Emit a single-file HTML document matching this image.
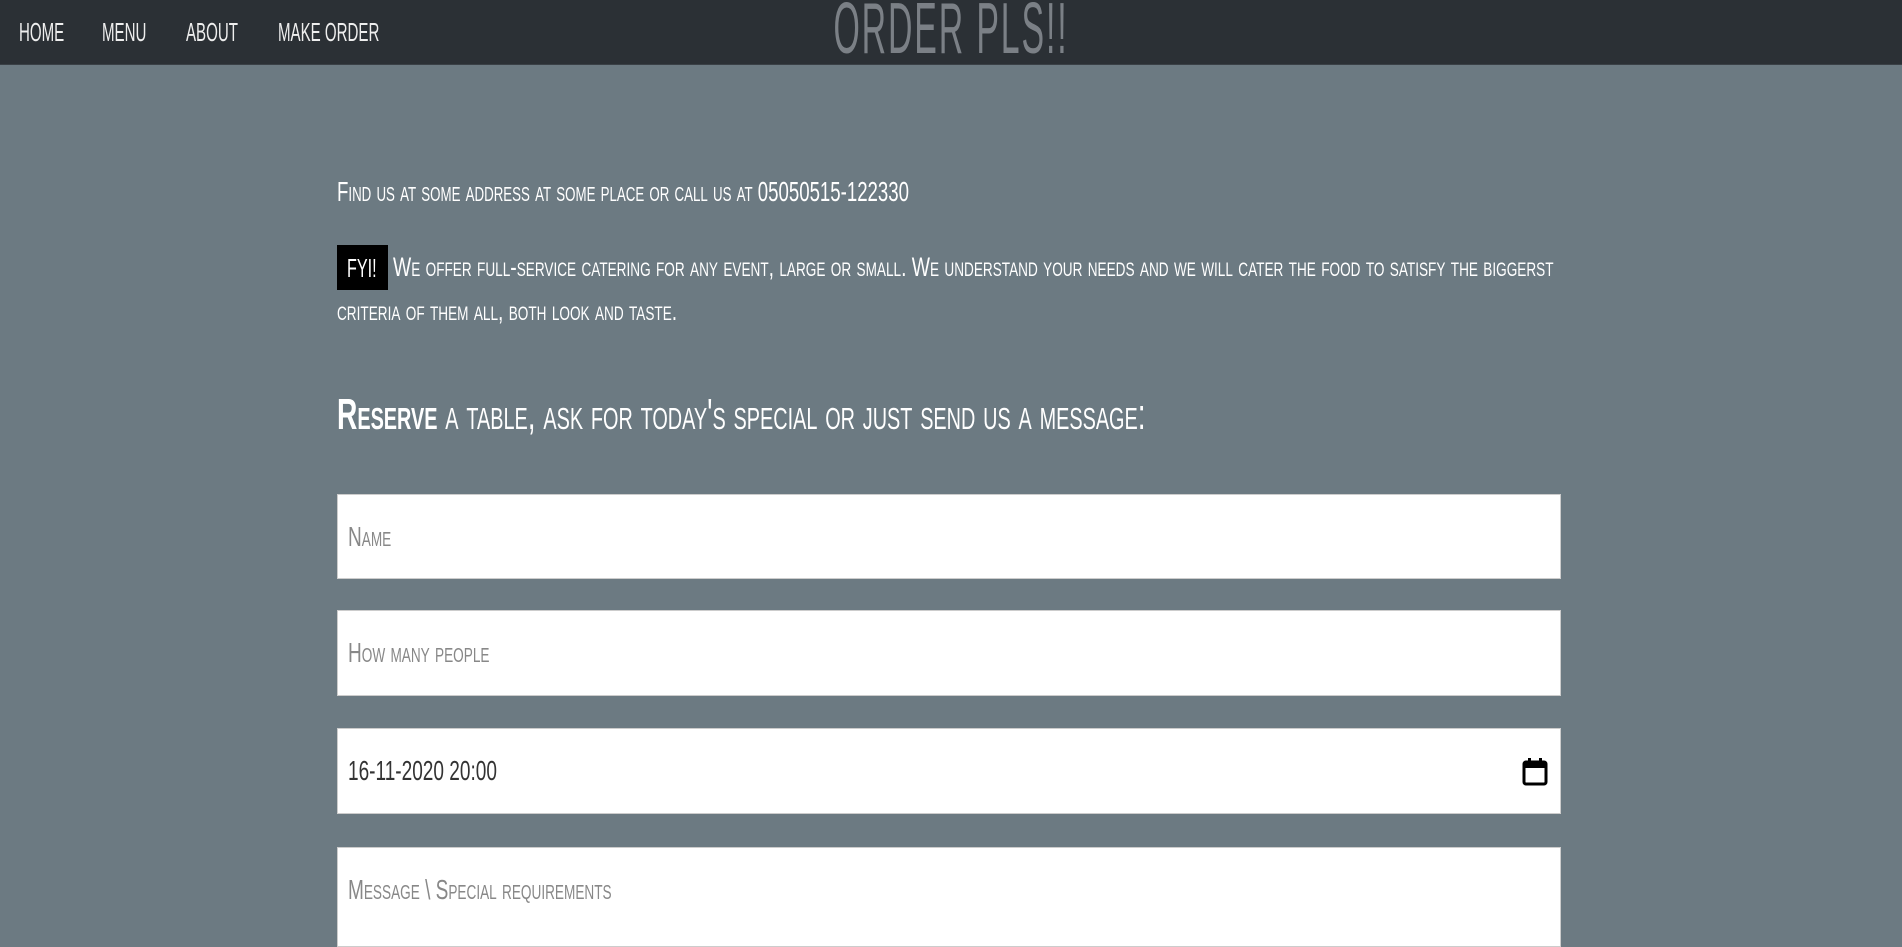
<!DOCTYPE html>
<html><head><meta charset="utf-8"><style>
html,body{margin:0;padding:0;width:1902px;height:926px;overflow:hidden;background:#6c7a82;font-family:"Liberation Sans Narrow","Liberation Sans",sans-serif;color:#fff}
nav{position:absolute;left:0;top:0;width:1902px;height:64px;background:#2b3035;border-bottom:1px solid #3a4046;overflow:hidden}
nav a{position:absolute;top:17px;font-size:26px;color:#eee;text-transform:uppercase;transform:scaleX(.58);transform-origin:left;letter-spacing:0}
.title{position:absolute;left:0;width:1902px;text-align:center;top:-12px;font-size:72px;color:#7b8086;letter-spacing:4px;transform:scaleX(.47);}
.c{position:absolute;left:337px;font-variant:small-caps;white-space:nowrap;transform-origin:left;}
.fyi{position:absolute;left:337px;top:245px;width:51px;height:45px;background:#000}
.inp{position:absolute;left:337px;width:1224px;background:#fff;border:1px solid #ccc;box-sizing:border-box}
.ph{position:absolute;left:10px;font-size:28px;color:#888;font-variant:small-caps;transform:scaleX(.68);transform-origin:left;white-space:nowrap}
</style></head><body>
<nav>
<a style="left:19px">Home</a>
<a style="left:102px">Menu</a>
<a style="left:186px">About</a>
<a style="left:278px">Make order</a>
<div class="title">ORDER PLS!!</div>
</nav>
<div class="c" style="top:176px;font-size:28px;transform:scaleX(.665)">Find us at some address at some place or call us at 05050515-122330</div>
<div class="fyi"></div>
<div class="c" style="top:253px;left:347px;font-size:26px;transform:scaleX(.62)">FYI!</div>
<div class="c" style="top:252px;left:393px;font-size:27px;transform:scaleX(.715)">We offer full-service catering for any event, large or small. We understand your needs and we will cater the food to satisfy the biggerst</div>
<div class="c" style="top:296px;font-size:27px;transform:scaleX(.715)">criteria of them all, both look and taste.</div>
<div class="c" style="top:390px;font-size:44px;transform:scaleX(.64)"><b>Reserve</b> a table, ask for today's special or just send us a message:</div>
<div class="inp" style="top:494px;height:85px"><div class="ph" style="top:26px">Name</div></div>
<div class="inp" style="top:610px;height:86px"><div class="ph" style="top:26px">How many people</div></div>
<div class="inp" style="top:728px;height:86px"><div class="ph" style="top:26px;color:#333">16-11-2020 20:00</div>
<svg style="position:absolute;right:12px;top:29px" width="26" height="28" viewBox="0 0 26 28"><rect x="2" y="4" width="22" height="22" rx="2" fill="none" stroke="#000" stroke-width="3"/><rect x="2" y="4" width="22" height="6" fill="#000"/><rect x="6" y="0" width="3" height="6" fill="#000"/><rect x="17" y="0" width="3" height="6" fill="#000"/></svg></div>
<div class="inp" style="top:847px;height:100px"><div class="ph" style="top:26px">Message \ Special requirements</div></div>
</body></html>
